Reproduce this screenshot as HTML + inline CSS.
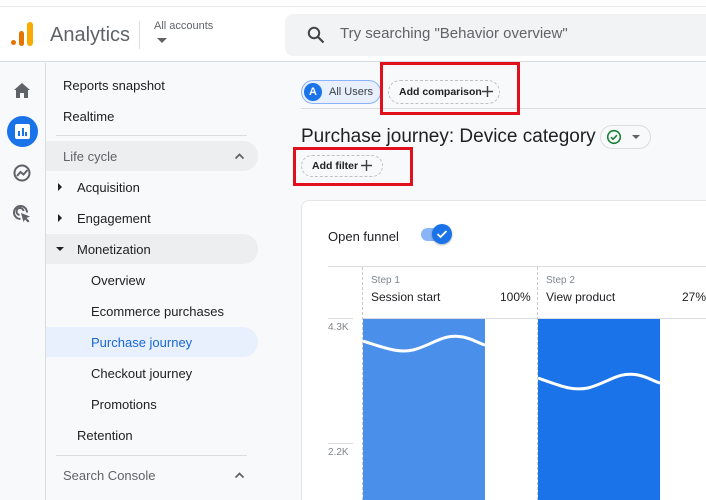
<!DOCTYPE html><html><head><style>
*{margin:0;padding:0;box-sizing:border-box}
html,body{width:706px;height:500px;overflow:hidden}
body{background:#f8f9fa;font-family:"Liberation Sans",sans-serif;color:#202124;position:relative}
.a{position:absolute}
.nav{position:absolute;left:63px;font-size:13px;color:#202124;white-space:nowrap}
.pill{position:absolute;left:46px;width:212px;height:30px;border-radius:0 15px 15px 0}
.red{position:absolute;border:3px solid #e0101c}
</style></head><body>
<div class="a" style="left:0;top:0;width:706px;height:7px;background:#fff;border-bottom:1px solid #e8eaed"></div>
<div class="a" style="left:0;top:7px;width:706px;height:55px;background:#fff;border-bottom:1px solid #dadce0"></div>
<div class="a" style="left:11px;top:40px;width:5px;height:5px;border-radius:50%;background:#e37400"></div>
<div class="a" style="left:19px;top:31px;width:5px;height:15px;border-radius:3px;background:#e37400"></div>
<div class="a" style="left:27px;top:22px;width:6px;height:24px;border-radius:3px;background:#f9ab00"></div>
<div class="a" style="left:50px;top:24px;font-size:20px;color:#5f6368">Analytics</div>
<div class="a" style="left:139px;top:21px;width:1px;height:28px;background:#dadce0"></div>
<div class="a" style="left:154px;top:20px;font-size:11px;color:#5f6368">All accounts</div>
<div class="a" style="left:157px;top:38px;width:0;height:0;border-left:5px solid transparent;border-right:5px solid transparent;border-top:5px solid #5f6368"></div>
<div class="a" style="left:285px;top:14px;width:430px;height:42px;border-radius:8px;background:#f1f3f4"></div>
<svg class="a" style="left:307px;top:26px" width="18" height="18" viewBox="0 0 18 18"><circle cx="7" cy="7" r="5.2" fill="none" stroke="#444" stroke-width="2"/><path d="M11 11l5.5 5.5" stroke="#444" stroke-width="2.2"/></svg>
<div class="a" style="left:340px;top:25px;font-size:15px;color:#5f6368">Try searching "Behavior overview"</div>
<div class="a" style="left:45px;top:63px;width:1px;height:437px;background:#dadce0"></div>
<svg class="a" style="left:13px;top:82px" width="18" height="17" viewBox="0 0 18 17"><path d="M9 1L1 8h2v8h4v-5h4v5h4V8h2z" fill="#5f6368"/></svg>
<div class="a" style="left:7px;top:116px;width:31px;height:31px;border-radius:50%;background:#1a73e8"></div>
<div class="a" style="left:15px;top:124px;width:15px;height:15px;border-radius:2px;background:#fff"></div>
<div class="a" style="left:18px;top:131px;width:2px;height:5px;background:#1a73e8"></div>
<div class="a" style="left:21.5px;top:128px;width:2px;height:8px;background:#1a73e8"></div>
<div class="a" style="left:25px;top:132px;width:2px;height:4px;background:#1a73e8"></div>
<svg class="a" style="left:12px;top:163px" width="20" height="20" viewBox="0 0 20 20"><circle cx="10" cy="10" r="7.5" fill="none" stroke="#5f6368" stroke-width="2"/><path d="M5 13l3.5-4 3 2.5 4-4.5" fill="none" stroke="#5f6368" stroke-width="2"/></svg>
<svg class="a" style="left:12px;top:204px" width="20" height="20" viewBox="0 0 20 20"><path d="M15 8.5A6.5 6.5 0 1 0 8.5 15" fill="none" stroke="#5f6368" stroke-width="2"/><path d="M11.5 7A3.5 3.5 0 1 0 7.5 11" fill="none" stroke="#5f6368" stroke-width="2"/><path d="M9 9l9 3.5-3.5 1.5 3 3-1.5 1.5-3-3L11.5 18z" fill="#5f6368"/></svg>
<div class="nav" style="top:78px">Reports snapshot</div>
<div class="nav" style="top:109px">Realtime</div>
<div class="a" style="left:56px;top:135px;width:191px;height:1px;background:#dadce0"></div>
<div class="pill" style="top:141px;background:#eceef0"></div>
<div class="nav" style="top:149px;color:#5f6368">Life cycle</div>
<svg class="a" style="left:234px;top:152px" width="11" height="8" viewBox="0 0 11 8"><path d="M1.5 6.5l4-4 4 4" fill="none" stroke="#5f6368" stroke-width="1.8"/></svg>
<div class="a" style="left:58px;top:183px;width:0;height:0;border-top:4px solid transparent;border-bottom:4px solid transparent;border-left:4px solid #202124"></div>
<div class="nav" style="left:77px;top:180px">Acquisition</div>
<div class="a" style="left:58px;top:214px;width:0;height:0;border-top:4px solid transparent;border-bottom:4px solid transparent;border-left:4px solid #202124"></div>
<div class="nav" style="left:77px;top:211px">Engagement</div>
<div class="pill" style="top:234px;background:#eceef0"></div>
<div class="a" style="left:56px;top:247px;width:0;height:0;border-left:4px solid transparent;border-right:4px solid transparent;border-top:4px solid #202124"></div>
<div class="nav" style="left:77px;top:242px">Monetization</div>
<div class="nav" style="left:91px;top:273px">Overview</div>
<div class="nav" style="left:91px;top:304px">Ecommerce purchases</div>
<div class="pill" style="top:327px;background:#e8f0fe"></div>
<div class="nav" style="left:91px;top:335px;color:#1967d2">Purchase journey</div>
<div class="nav" style="left:91px;top:366px">Checkout journey</div>
<div class="nav" style="left:91px;top:397px">Promotions</div>
<div class="nav" style="left:77px;top:428px">Retention</div>
<div class="a" style="left:56px;top:455px;width:191px;height:1px;background:#dadce0"></div>
<div class="nav" style="top:468px;color:#5f6368">Search Console</div>
<svg class="a" style="left:234px;top:471px" width="11" height="8" viewBox="0 0 11 8"><path d="M1.5 6.5l4-4 4 4" fill="none" stroke="#5f6368" stroke-width="1.8"/></svg>
<div class="a" style="left:301px;top:80px;width:80px;height:24px;border-radius:12px;background:#e8f0fe;border:1px solid #8ab4f8"></div>
<div class="a" style="left:304px;top:83px;width:18px;height:18px;border-radius:50%;background:#1a73e8;color:#fff;font-size:11px;font-weight:bold;text-align:center;line-height:18px">A</div>
<div class="a" style="left:329px;top:86px;font-size:11px;color:#3c4043">All Users</div>
<div class="a" style="left:388px;top:80px;width:112px;height:24px;border-radius:12px;border:1px dashed #bdc1c6"></div>
<div class="a" style="left:399px;top:86px;font-size:10.5px;color:#202124;font-weight:bold">Add comparison</div>
<svg class="a" style="left:482px;top:86px" width="11" height="11" viewBox="0 0 11 11"><path d="M5.5 0v11M0 5.5h11" stroke="#3c4043" stroke-width="1.4"/></svg>
<div class="a" style="left:301px;top:108px;width:405px;height:1px;background:#dadce0"></div>
<div class="red" style="left:380px;top:62px;width:140px;height:53px"></div>
<div class="a" style="left:301px;top:126px;font-size:19px;color:#202124">Purchase journey: Device category</div>
<div class="a" style="left:600px;top:125px;width:51px;height:24px;border-radius:12px;border:1px solid #dadce0;background:#f8f9fa"></div>
<svg class="a" style="left:606px;top:129px" width="16" height="16" viewBox="0 0 16 16"><circle cx="8" cy="8" r="6.3" fill="none" stroke="#188038" stroke-width="1.6"/><path d="M5 8.2l2 2 4-4" fill="none" stroke="#188038" stroke-width="1.6"/></svg>
<div class="a" style="left:632px;top:135px;width:0;height:0;border-left:4px solid transparent;border-right:4px solid transparent;border-top:4px solid #5f6368"></div>
<div class="a" style="left:301px;top:155px;width:82px;height:22px;border-radius:11px;border:1px dashed #bdc1c6"></div>
<div class="a" style="left:312px;top:160px;font-size:10.5px;font-weight:bold">Add filter</div>
<svg class="a" style="left:361px;top:160px" width="11" height="11" viewBox="0 0 11 11"><path d="M5.5 0v11M0 5.5h11" stroke="#3c4043" stroke-width="1.4"/></svg>
<div class="red" style="left:293px;top:147px;width:120px;height:39px"></div>
<div class="a" style="left:301px;top:200px;width:420px;height:300px;background:#fff;border:1px solid #e3e5e8;border-bottom:none;border-radius:8px 8px 0 0"></div>
<div class="a" style="left:328px;top:229px;font-size:13px">Open funnel</div>
<div class="a" style="left:421px;top:228px;width:28px;height:13px;border-radius:7px;background:#8ab4f8"></div>
<div class="a" style="left:432px;top:224px;width:20px;height:20px;border-radius:50%;background:#1a73e8;box-shadow:0 1px 2px rgba(0,0,0,.3)"></div>
<svg class="a" style="left:436px;top:229px" width="12" height="10" viewBox="0 0 12 10"><path d="M1.5 5l3 3 6-6" fill="none" stroke="#fff" stroke-width="1.8"/></svg>
<div class="a" style="left:328px;top:266px;width:378px;height:1px;background:#dadce0"></div>
<div class="a" style="left:363px;top:318px;width:343px;height:1px;background:#dadce0"></div>
<div class="a" style="left:362px;top:267px;width:0;height:233px;border-left:1px dashed #c8cacd"></div>
<div class="a" style="left:537px;top:267px;width:0;height:233px;border-left:1px dashed #c8cacd"></div>
<div class="a" style="left:371px;top:275px;font-size:10px;color:#80868b">Step 1</div>
<div class="a" style="left:371px;top:290px;font-size:12px">Session start</div>
<div class="a" style="left:500px;top:290px;font-size:12px">100%</div>
<div class="a" style="left:546px;top:275px;font-size:10px;color:#80868b">Step 2</div>
<div class="a" style="left:546px;top:290px;font-size:12px">View product</div>
<div class="a" style="left:682px;top:290px;font-size:12px">27%</div>
<div class="a" style="left:328px;top:318px;width:25px;height:1px;background:#dadce0"></div>
<div class="a" style="left:328px;top:443px;width:25px;height:1px;background:#dadce0"></div>
<div class="a" style="left:328px;top:322px;font-size:10px;color:#80868b">4.3K</div>
<div class="a" style="left:328px;top:447px;font-size:10px;color:#80868b">2.2K</div>
<svg class="a" style="left:363px;top:319px" width="343" height="181" viewBox="0 0 343 181">
<rect x="0" y="0" width="122" height="181" fill="#4a8fea"/>
<path d="M0 22 C25 30,35 34,50 31 C70 26,80 14,100 18 C110 20,115 24,122 26" fill="none" stroke="#fff" stroke-width="3"/>
<rect x="175" y="0" width="122" height="181" fill="#1a73e8"/>
<path d="M175 59 C200 68,210 72,225 69 C245 64,255 52,275 56 C285 58,290 62,297 64" fill="none" stroke="#fff" stroke-width="3"/>
</svg>
</body></html>
